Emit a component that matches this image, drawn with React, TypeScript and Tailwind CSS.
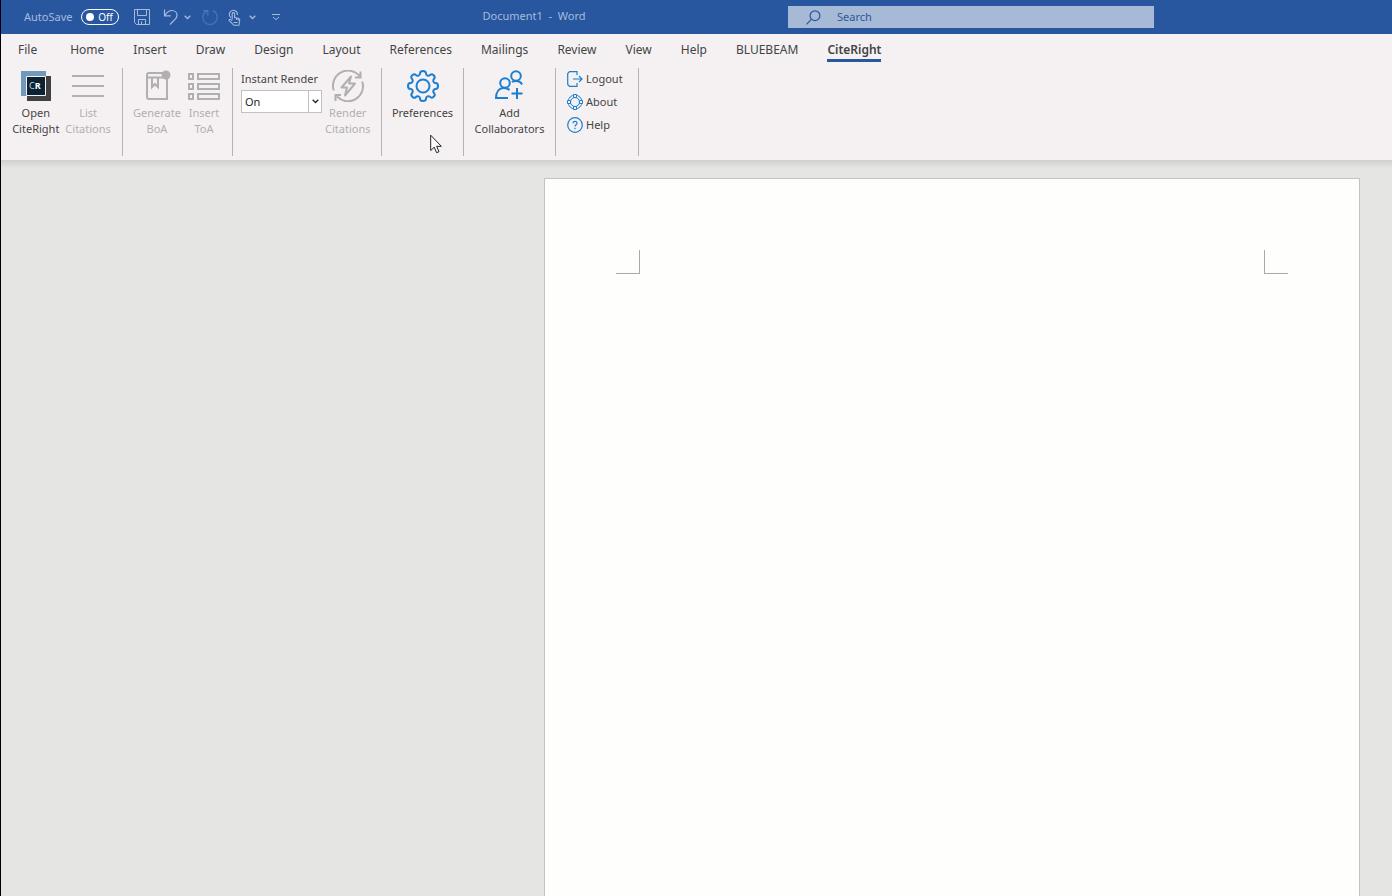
import type { ReactNode } from 'react';

const TABS = [
  'File',
  'Home',
  'Insert',
  'Draw',
  'Design',
  'Layout',
  'References',
  'Mailings',
  'Review',
  'View',
  'Help',
  'BLUEBEAM',
  'CiteRight',
];

const ChevronIcon = () => (
  <svg width="7" height="5" viewBox="0 0 7 5" fill="none" stroke="currentColor" strokeWidth="1.3">
    <path d="M0.7 0.8 3.5 3.5 6.3 0.8" />
  </svg>
);

const SaveIcon = () => (
  <svg width="16" height="16" viewBox="0 0 16 16" fill="none" stroke="currentColor">
    <path d="M.5.5h15v15H2.5l-2-2zM3.500.5v6h9v-6M4.500 15.500v-5h7v5M7.500 12.500v3" />
  </svg>
);

const UndoIcon = () => (
  <svg width="15" height="16" viewBox="0 0 15 16" fill="none" stroke="currentColor" strokeWidth="1.2">
    <path d="M1.500.5v6.300h6.300M1.700 6.600C4 3 6 1.500 9 1.500c2.900 0 5 2 5 4.700 0 1.700-.7 2.800-1.800 3.900L7 15.500" />
  </svg>
);

const RedoIcon = () => (
  <svg width="16" height="16" viewBox="0 0 16 16" fill="none" stroke="currentColor" strokeWidth="1.2">
    <path d="M1 1.600h4.800v4.800M5.500 1.900C2.700 3 .8 5.300.8 8.200c0 4 3.200 7.200 7.200 7.200s7.200-3.200 7.200-7.200c0-3-1.800-5.500-4.400-6.600" />
  </svg>
);

const TouchIcon = () => (
  <svg width="13" height="17" viewBox="0 0 13 17" fill="none" stroke="currentColor" strokeWidth="1.1">
    <path d="M3 8.500A4 4 0 1 1 9.300 6M4.200 10.500V4.800c0-1.600 2.400-1.600 2.400 0v3.700l3.400.8c1.300.3 1.900 1 1.700 2.200l-.7 4.800H6L1.400 11.800c-.8-1 .4-2 1.400-1.200l1.400 1M8.500 9v2M10.300 9.500v2M5.500 13.500h4" />
  </svg>
);

const CustomizeIcon = () => (
  <svg width="8" height="7" viewBox="0 0 8 7" fill="none" stroke="currentColor">
    <path d="M0 .5h8M1 3l3 2.700L7 3" />
  </svg>
);

const SearchIcon = () => (
  <svg width="15" height="15" viewBox="0 0 15 15" fill="none" stroke="currentColor" strokeWidth="1.2">
    <circle cx="9" cy="5.700" r="4.900" />
    <path d="M5.500 9.200.5 14.300" />
  </svg>
);

const CiteRightIcon = () => (
  <svg width="32" height="32" viewBox="0 0 32 32">
    <path d="M1 1h25v25H1z" fill="#7199b9" />
    <path d="M7 6h24v25H7z" fill="#404040" />
    <path d="M6.500 6.500h19v19h-19z" fill="#0b2335" stroke="#f5f1f3" />
    <text x="9" y="19" fontSize="9" fontFamily="Noto Sans, sans-serif" fill="#c9d6df">
      C
      <tspan fontWeight="700" fill="#fff">
        R
      </tspan>
    </text>
  </svg>
);

const ListIcon = () => (
  <svg width="32" height="32" viewBox="0 0 32 32" stroke="currentColor" strokeWidth="2">
    <path d="M0 6h32M0 16h32M0 26h32" />
  </svg>
);

const BookIcon = () => (
  <svg width="32" height="32" viewBox="0 0 32 32" fill="none" stroke="currentColor" strokeWidth="2">
    <path d="M22 3H8C6.500 3 6 3.800 6 5v22c0 1.500.8 2 2 2h18V9M6 7.500h16M11 8v9l3-3 3 3V8" />
    <circle cx="25" cy="5" r="4.500" fill="currentColor" stroke="none" />
  </svg>
);

const TableIcon = () => (
  <svg width="32" height="32" viewBox="0 0 32 32" fill="none" stroke="currentColor" strokeWidth="2">
    <path d="M1 4h4v5H1zM10 4h21v5H10zM1 14h4v5H1zM10 14h21v5H10zM1 24h4v5H1zM10 24h21v5H10z" />
  </svg>
);

const RenderIcon = () => (
  <svg width="32" height="32" viewBox="0 0 32 32" fill="none" stroke="currentColor" strokeWidth="2">
    <path d="M1.800 20.500A15 15 0 0 1 27.500 6M30.200 11.500A15 15 0 0 1 5 26.500M28.500 1.500v6h-5.500M3.500 31v-6H9" />
    <path d="M19 6.500 9.500 17.500h5.500L13 25.500l10-12h-6z" strokeLinejoin="round" />
  </svg>
);

const GearIcon = () => (
  <svg width="32" height="32" viewBox="0 0 32 32" fill="none" stroke="currentColor" strokeWidth="2" strokeLinejoin="round">
    <circle cx="16" cy="16" r="6.500" />
    <path d="M13 3.500C13 1.500 14 1 16 1s3 .5 3 2.500 2.500 3 4 1.600 2.500-1.100 3.700.2 1.600 2.300.2 3.700-.4 4 1.600 4S31 14 31 16s-.5 3-2.500 3-3 2.500-1.600 4 1.100 2.500-.2 3.700-2.300 1.600-3.700.2-4-.4-4 1.600-1 2.500-3 2.500-3-.5-3-2.500-2.500-3-4-1.600-2.500 1.100-3.700-.2-1.600-2.300-.2-3.700.4-4-1.600-4S1 18 1 16s.5-3 2.500-3 3-2.500 1.600-4-1.100-2.500.2-3.700 2.300-1.600 3.700-.2 4 .4 4-1.600z" />
  </svg>
);

const CollaboratorsIcon = () => (
  <svg width="32" height="32" viewBox="0 0 32 32" fill="none" stroke="currentColor" strokeWidth="2">
    <circle cx="22" cy="6" r="4.800" />
    <circle cx="11" cy="13" r="4.800" />
    <path d="M14 28H2c0-6 3-10 8-10 2.500 0 4 .7 5.500 2M18 12c1-.8 2.300-1 4-1 3 0 5 1.200 6 3.500M23 18v11M17.500 23.500h11" />
  </svg>
);

const LogoutIcon = () => (
  <svg width="16" height="16" viewBox="0 0 16 16" fill="none" stroke="currentColor" strokeWidth="1.2">
    <path d="M10 4V.7H2.500L.7 2.500v11l1.800 1.800H10V12M6 8h9M12 5l3 3-3 3" />
  </svg>
);

const AboutIcon = () => (
  <svg width="16" height="16" viewBox="0 0 16 16" fill="none" stroke="currentColor">
    <circle cx="8" cy="8" r="7" />
    <circle cx="8" cy="8" r="4.500" />
    <g fill="#f5f1f3">
      <path d="M6.500.5h3v3h-3zM6.500 12.500h3v3h-3zM.5 6.500h3v3h-3zM12.500 6.500h3v3h-3z" />
    </g>
  </svg>
);

const HelpIcon = () => (
  <svg width="16" height="16" viewBox="0 0 16 16" fill="none" stroke="currentColor" strokeWidth="1.2">
    <circle cx="8" cy="8" r="7.300" />
    <path d="M6 6.300c0-2.600 4-2.600 4 0 0 1.400-2 1.500-2 3.200M8 10.800v1.400" />
  </svg>
);

const Pointer = () => (
  <svg className="absolute left-12 top-[66px]" width="12" height="20" viewBox="0 0 12 20" fill="#fff" stroke="#222">
    <path d="M.7 1.200v15.300l3.500-3.300 2.400 5.500 2.400-1-2.400-5.400h4.700z" />
  </svg>
);

type RibbonButtonProps = {
  icon: ReactNode;
  lines: string[];
  disabled?: boolean;
  accent?: boolean;
};

const RibbonButton = ({ icon, lines, disabled, accent }: RibbonButtonProps) => (
  <button
    type="button"
    disabled={disabled}
    className="flex flex-col items-center text-[#444444] disabled:text-[#b1afb0]"
  >
    <span className={accent ? 'mt-0.5 mb-[3px] text-[#1a7fd0]' : 'mt-0.5 mb-[3px]'}>{icon}</span>
    {lines.map((line) => (
      <span key={line} className="whitespace-nowrap">
        {line}
      </span>
    ))}
  </button>
);

const SmallButton = ({ icon, label }: { icon: ReactNode; label: string }) => (
  <button type="button" className="flex items-center gap-[3px] h-[23px]">
    <span className="text-[#1a7fd0]">{icon}</span>
    {label}
  </button>
);

const TitleBar = () => (
  <header className="flex items-center h-[34px] bg-[#2857a0] text-[#a5bbda] text-[11px]">
    <div className="flex items-center pl-[23px]">
      <label htmlFor="autosave" className="w-[57px]">
        AutoSave
      </label>
      <button
        id="autosave"
        type="button"
        role="switch"
        aria-checked="false"
        className="flex items-center justify-between w-[38px] h-4 pl-1 pr-[5px] rounded-full border border-white text-white text-[10px]"
      >
        <span className="size-2 rounded-full bg-white" />
        Off
      </button>
      <button type="button" aria-label="Save" className="ml-[15px]">
        <SaveIcon />
      </button>
      <button type="button" aria-label="Undo" className="flex items-center gap-1.5 ml-[13px]">
        <UndoIcon />
        <ChevronIcon />
      </button>
      <button type="button" aria-label="Redo" disabled className="ml-[11px] text-[#4d76b4]">
        <RedoIcon />
      </button>
      <button type="button" aria-label="Touch mode" className="flex items-center gap-2 ml-2.5">
        <TouchIcon />
        <ChevronIcon />
      </button>
      <button type="button" aria-label="Customize toolbar" className="ml-4">
        <CustomizeIcon />
      </button>
    </div>
    <h1 className="flex-1 pb-0.5 text-center whitespace-pre">{'Document1  -  Word'}</h1>
    <label className="flex items-center gap-4 w-[366px] h-[22px] pl-[18px] bg-[#a6b9d6] text-[#2b579a]">
      <SearchIcon />
      <input
        type="text"
        aria-label="Search"
        placeholder="Search"
        className="flex-1 bg-transparent outline-none placeholder:text-[#2b579a]"
      />
    </label>
    <div className="w-[238px]" />
  </header>
);

const Ribbon = () => {
  const groupStyle = 'flex h-[88px] border-r border-[#b5b3b2]';

  return (
    <div className="flex pb-1 text-[11px] leading-4 text-[#444444]">
      <div className={`${groupStyle} justify-center w-[122px] gap-1.5`}>
        <RibbonButton icon={<CiteRightIcon />} lines={['Open', 'CiteRight']} />
        <RibbonButton icon={<ListIcon />} lines={['List', 'Citations']} disabled />
      </div>
      <div className={`${groupStyle} justify-center w-[110px] gap-[7px] pr-0.5`}>
        <RibbonButton icon={<BookIcon />} lines={['Generate', 'BoA']} disabled />
        <RibbonButton icon={<TableIcon />} lines={['Insert', 'ToA']} disabled />
      </div>
      <div className={`${groupStyle} w-[149px] gap-[3px] pl-2`}>
        <div className="flex flex-col gap-[3px] pt-[3px]">
          <label htmlFor="instant-render">Instant Render</label>
          <div className="relative">
            <select
              id="instant-render"
              className="block appearance-none w-[81px] h-[23px] px-[3px] border border-[#c3c1c0] bg-white text-[#262626]"
            >
              <option>On</option>
              <option>Off</option>
            </select>
            <span className="absolute inset-y-0 right-0 flex items-center justify-center w-[14px] border-l border-[#c3c1c0] text-[#262626] pointer-events-none">
              <ChevronIcon />
            </span>
          </div>
        </div>
        <RibbonButton icon={<RenderIcon />} lines={['Render', 'Citations']} disabled />
      </div>
      <div className={`${groupStyle} justify-center relative w-[82px]`}>
        <RibbonButton icon={<GearIcon />} lines={['Preferences']} accent />
        <Pointer />
      </div>
      <div className={`${groupStyle} justify-center w-[92px]`}>
        <RibbonButton icon={<CollaboratorsIcon />} lines={['Add', 'Collaborators']} accent />
      </div>
      <div className={`${groupStyle} w-[83px] pl-[11px]`}>
        <div className="flex flex-col -mt-px">
          <SmallButton icon={<LogoutIcon />} label="Logout" />
          <SmallButton icon={<AboutIcon />} label="About" />
          <SmallButton icon={<HelpIcon />} label="Help" />
        </div>
      </div>
    </div>
  );
};

const App = () => (
  <div
    className="flex flex-col h-screen overflow-hidden border-l border-black bg-[#e5e5e4]"
    style={{ fontFamily: '"Noto Sans", sans-serif' }}
  >
    <TitleBar />
    <div className="bg-[#f5f1f3]">
      <nav className="flex items-start gap-[29px] h-[34px] pl-[17px] pt-[6px] text-[12px] leading-[19px] text-[#444444]">
        {TABS.map((tab) => (
          <button
            key={tab}
            type="button"
            className={
              tab === 'CiteRight'
                ? 'border-b-3 border-[#2857a0] font-semibold'
                : 'border-b-3 border-transparent first:mr-1'
            }
          >
            {tab}
          </button>
        ))}
      </nav>
      <Ribbon />
    </div>
    <div className="h-2 shrink-0 bg-linear-to-b from-[#cfcfcd] to-[#e5e5e4]" />
    <main className="flex flex-1 justify-end min-h-0 pt-[10px] pr-8">
      <div className="flex justify-between items-start w-[816px] h-[1056px] shrink-0 px-[71px] pt-[71px] border border-[#c3c3c1] bg-[#fefefd]">
        <div className="size-6 border-r border-b border-[#a9a9a9]" />
        <div className="size-6 border-l border-b border-[#a9a9a9]" />
      </div>
    </main>
  </div>
);

export default App;
